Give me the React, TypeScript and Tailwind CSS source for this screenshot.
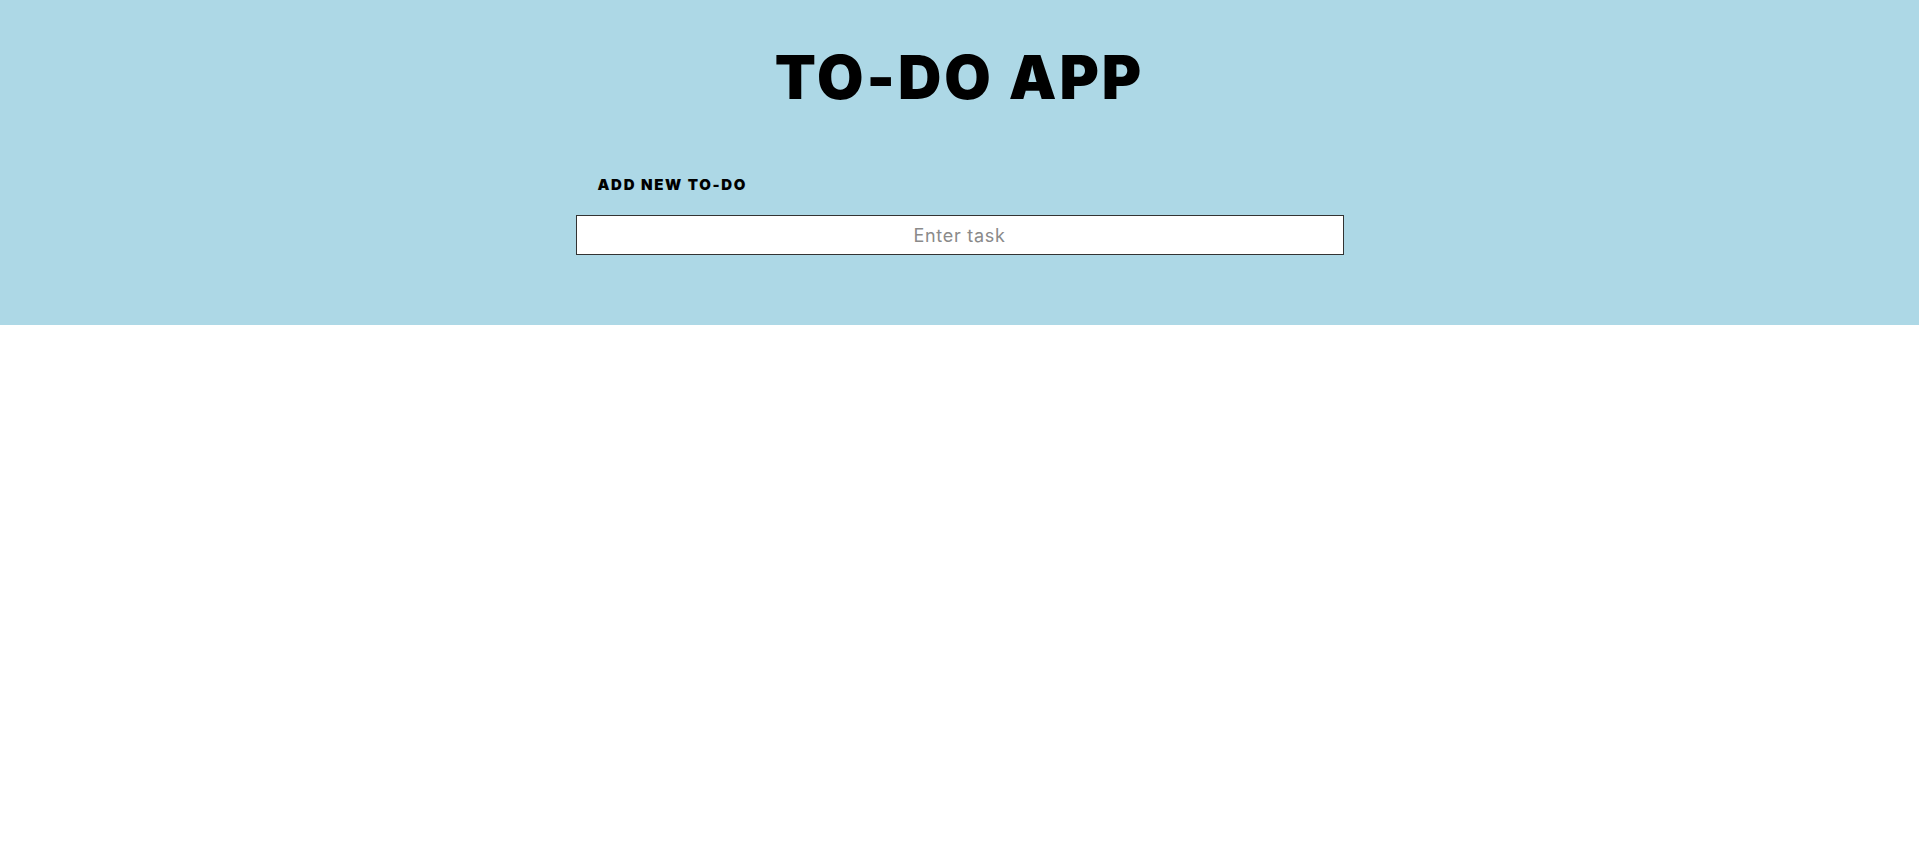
export default function App() {
  return (
    <div className="min-h-screen bg-white font-['Inter',sans-serif]">
      <header className="flex h-[325px] flex-col items-center bg-[#add8e6]">
        <h1 className="mt-[41px] text-[60px] font-black leading-[72px] tracking-[3px] text-black">
          TO-DO APP
        </h1>
        <div className="mt-[62px] flex w-[768px] flex-col">
          <label
            htmlFor="task"
            className="ml-[22px] text-[15px] font-black leading-[20px] tracking-[1.7px] text-black"
          >
            ADD NEW TO-DO
          </label>
          <input
            id="task"
            type="text"
            placeholder="Enter task"
            className="mt-[20px] h-[40px] w-full border border-[#333] bg-white text-center text-[18px] tracking-[0.7px] text-black outline-none placeholder:text-[#8a8a8a]"
          />
        </div>
      </header>
    </div>
  )
}
